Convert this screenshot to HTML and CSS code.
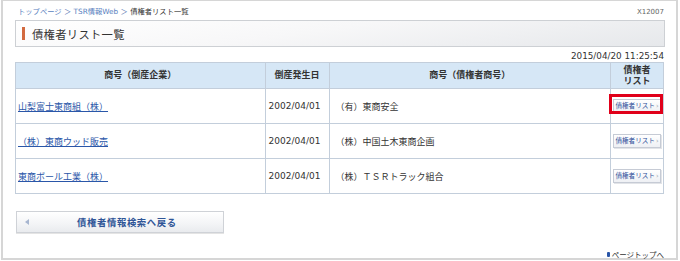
FILE: index.html
```html
<!DOCTYPE html>
<html lang="ja">
<head>
    <meta charset="UTF-8">
    <meta name="viewport" content="width=device-width, initial-scale=1.0">
    <title>債権者リスト一覧</title>
    <link rel="stylesheet" href="styles.css">
</head>
<body>
    <div class="frame">
        <div class="topline">
            <div class="breadcrumb">
                <a href="#">トップページ</a> ＞ <a href="#">TSR情報Web</a> ＞ <span class="current">債権者リスト一覧</span>
            </div>
            <div class="screen-id">X12007</div>
        </div>

        <div class="title-bar">
            <span class="title-mark"></span>
            <h1>債権者リスト一覧</h1>
        </div>

        <div class="timestamp">2015/04/20 11:25:54</div>

        <table class="list">
            <colgroup>
                <col class="c-name">
                <col class="c-date">
                <col class="c-creditor">
                <col class="c-list">
            </colgroup>
            <thead>
                <tr>
                    <th>商号（倒産企業）</th>
                    <th>倒産発生日</th>
                    <th>商号（債権者商号）</th>
                    <th>債権者<br>リスト</th>
                </tr>
            </thead>
            <tbody>
                <tr>
                    <td><a href="#">山梨富士東商組（株）</a></td>
                    <td class="date">2002/04/01</td>
                    <td class="creditor">（有）東商安全</td>
                    <td class="btn-cell"><a class="list-btn" href="#">債権者リスト<span class="arr">›</span></a><span class="highlight"></span></td>
                </tr>
                <tr>
                    <td><a href="#">（株）東商ウッド販売</a></td>
                    <td class="date">2002/04/01</td>
                    <td class="creditor">（株）中国土木東商企画</td>
                    <td class="btn-cell"><a class="list-btn" href="#">債権者リスト<span class="arr">›</span></a></td>
                </tr>
                <tr>
                    <td><a href="#">東商ボール工業（株）</a></td>
                    <td class="date">2002/04/01</td>
                    <td class="creditor">（株）ＴＳＲトラック組合</td>
                    <td class="btn-cell"><a class="list-btn" href="#">債権者リスト<span class="arr">›</span></a></td>
                </tr>
            </tbody>
        </table>

        <a class="back-btn" href="#">
            <span class="back-arrow"></span>
            <span class="back-label">債権者情報検索へ戻る</span>
        </a>

        <div class="pagetop">
            <a href="#"><span class="pagetop-icon"></span>ページトップへ</a>
        </div>
    </div>
</body>
</html>
```

FILE: styles.css
```css
body {
    margin: 0;
    padding: 0;
    background-color: #fff;
    color: #333;
    font-family: "DejaVu Sans", "Noto Sans CJK JP", sans-serif;
}
a {
    color: #2a56a8;
}
.frame {
    width: 650px;
    height: 257px;
    margin: 0 3px 0 1px;
    padding: 0 11px 0 12px;
    border: 2px solid #d6d6d6;
    border-top-width: 1px;
    position: relative;
}
.topline {
    display: flex;
    justify-content: space-between;
    align-items: center;
    height: 18px;
    padding: 1px 1px 0 3px;
    font-size: 7.3px;
}
.breadcrumb {
    color: #5a78b4;
}
.breadcrumb a {
    color: #5a7fc0;
    text-decoration: none;
}
.breadcrumb .current {
    color: #333;
}
.screen-id {
    color: #666;
    font-size: 7px;
    padding-top: 2px;
}
.title-bar {
    display: flex;
    align-items: center;
    height: 25px;
    border: 1px solid #cdd0d4;
    background: linear-gradient(172deg, #ffffff 0%, #f7f7f8 45%, #e6e8eb 100%);
}
.title-mark {
    width: 3px;
    height: 13px;
    margin: 0 7px 0 6px;
    background-color: #d26a40;
}
h1 {
    margin: 0;
    font-size: 11.3px;
    font-weight: normal;
    color: #333;
    letter-spacing: 0.3px;
}
.timestamp {
    text-align: right;
    font-size: 8.8px;
    height: 15px;
    line-height: 18px;
    padding-right: 1px;
    color: #333;
}
.list {
    width: 649px;
    border-collapse: collapse;
    border: 1px solid #c3cedb;
    font-size: 9px;
}
.c-name { width: 251px; }
.c-date { width: 64px; }
.c-creditor { width: 283px; }
.c-list { width: 51px; }
.list th {
    height: 25px;
    padding: 0;
    background-color: #d6e7f6;
    border: 1px solid #c3cedb;
    font-weight: bold;
    color: #333;
    line-height: 11px;
}
.list td {
    height: 34px;
    padding: 0 2px;
    border: 1px solid #c3cedb;
    color: #333;
}
.list td a {
    color: #2a56a8;
}
.list td.date {
    padding-left: 3px;
}
.list td.creditor {
    padding-left: 6px;
}
.btn-cell {
    position: relative;
    text-align: center;
}
.list-btn {
    display: inline-block;
    width: 46px;
    height: 12px;
    line-height: 12px;
    font-size: 6.6px;
    color: #2f4f9a !important;
    text-decoration: none;
    background: linear-gradient(to bottom, #ffffff, #eef0f4);
    border: 1px solid #c6cbd5;
    box-shadow: 1px 1px 0 #e2e4e8;
    text-align: center;
}
.list-btn .arr {
    color: #9aa;
    margin-left: 1px;
}
.highlight {
    position: absolute;
    left: -2px;
    top: 5px;
    width: 48px;
    height: 14px;
    border: 3px solid #e0001a;
}
.back-btn {
    display: flex;
    align-items: center;
    width: 206px;
    height: 20px;
    margin-top: 17px;
    margin-left: 1px;
    border: 1px solid #cfd2d7;
    background: linear-gradient(to bottom, #ffffff 0%, #f3f4f6 60%, #e9ebee 100%);
    box-shadow: 0 1px 0 #e4e4e4;
    text-decoration: none;
}
.back-arrow {
    width: 0;
    height: 0;
    margin-left: 8px;
    border-top: 3px solid transparent;
    border-bottom: 3px solid transparent;
    border-right: 4px solid #a7b6d0;
}
.back-label {
    margin-left: 48px;
    font-size: 9.4px;
    font-weight: bold;
    color: #2f5597;
    letter-spacing: 0.6px;
}
.pagetop {
    position: absolute;
    right: 12px;
    bottom: -2px;
    font-size: 7.5px;
}
.pagetop a {
    display: flex;
    align-items: center;
    color: #333;
    text-decoration: none;
}
.pagetop-icon {
    width: 3px;
    height: 5px;
    margin-right: 2px;
    background-color: #2a56a8;
    border-radius: 1px;
}
```
